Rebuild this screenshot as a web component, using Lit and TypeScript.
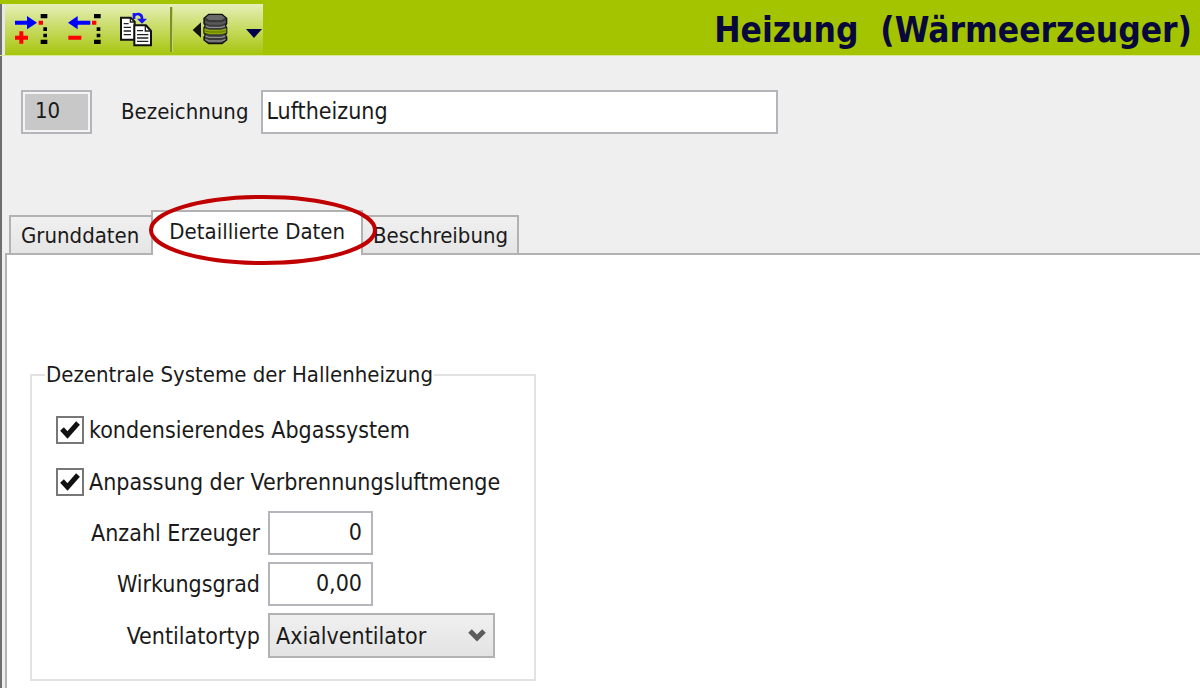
import { LitElement, html, css, svg } from "lit";
import { customElement, state } from "lit/decorators.js";

const addIcon = svg`
  <svg viewBox="42 39 105 105" width="35" height="35" aria-hidden="true">
    <path fill="#0000ff" d="M45 65H81V51L111 71L81 91V77H45Z" />
    <path fill="#ff0000" d="M45 110H58V97H70V110H84V122H70V134H58V122H45ZM116 65h13v12h-13z" />
    <path d="M122 45h20v13h-20zM130 85h11v11h-11zM130 104h11v11h-11zM122 122h20v13h-20z" />
  </svg>`;

const removeIcon = svg`
  <svg viewBox="198 39 105 105" width="35" height="35" aria-hidden="true">
    <path fill="#0000ff" d="M271 65H233V51L204 71L233 91V77H271Z" />
    <path fill="#ff0000" d="M205 110h39v12h-39zM276 65h13v12h-13z" />
    <path d="M282 45h20v13h-20zM290 85h11v11h-11zM290 104h11v11h-11zM282 122h20v13h-20z" />
  </svg>`;

const copyIcon = svg`
  <svg viewBox="354 37 105 105" width="35" height="35" aria-hidden="true">
    <path fill="#fff" stroke="#111" stroke-width="6" d="M363 54H392L404 66V120H363Z" />
    <path fill="none" stroke="#222" stroke-width="4" d="M371 72H386M371 83H393M371 94H393M371 105H393M391 54V67H402" />
    <path fill="none" stroke="#1515f5" stroke-width="8" d="M401 50C408 39 427 41 426 58" />
    <path fill="#1515f5" d="M398 40h8v18h-8zM411 57H441L426 72Z" />
    <path fill="#fff" stroke="#111" stroke-width="6" d="M403 77H438L453 94V137H403Z" />
    <path fill="none" stroke="#222" stroke-width="4" d="M411 93H429M411 105H445M411 115H445M411 125H445M436 77V94H453" />
  </svg>`;

const databaseIcon = svg`
  <svg viewBox="570 39 114 105" width="38" height="35" aria-hidden="true">
    <path fill="#111" d="M578 93L603 70V116Z" />
    <path fill="#3a3a3a" stroke="#111" stroke-width="4" d="M626 46H666L680 58V74L676 80L680 86V102L676 108L680 114V123L666 134H626L612 123V114L616 108L612 102V86L616 80L612 74V58Z" />
    <path fill="#6a6a6a" d="M628 48H664L675 56L664 63H628L617 56Z" />
    <path fill="#5a5a5a" d="M615 65L628 70H664L677 65V71L664 77H628L615 71Z" />
    <path fill="#8ea800" d="M613 88L628 92H664L679 88V101L664 106H628L613 101Z" />
    <path fill="none" stroke="#4a5800" stroke-width="2" d="M613 95L628 99H664L679 95" />
    <path fill="none" stroke="#8c8c8c" stroke-width="4" d="M617 81L628 85H664L675 81M616 111L628 115H664L676 111M616 121L628 126H664L676 121" />
  </svg>`;

const caretIcon = svg`
  <svg viewBox="735 39 54 105" width="18" height="35" aria-hidden="true">
    <path fill="#00004a" d="M738 90H786L762 117Z" />
  </svg>`;

@customElement("app-root")
export class AppRoot extends LitElement {
  @state() private activeTab = 1;

  private tabs = ["Grunddaten", "Detaillierte Daten", "Beschreibung"];

  static styles = css`
    :host {
      display: flex;
      flex-direction: column;
      box-sizing: border-box;
      min-height: 100vh;
      background: #efefef;
      color: #1a1a1a;
      font: 22px/28px "DejaVu Sans Condensed", "DejaVu Sans", sans-serif;
    }
    * {
      box-sizing: border-box;
    }
    input,
    select,
    button {
      font: inherit;
      color: inherit;
      margin: 0;
      border-radius: 0;
    }
    .header {
      display: flex;
      align-items: stretch;
      justify-content: space-between;
      background: #a4c400;
      padding: 4px 8px 0 0;
      border-bottom: 1px solid #dbe89a;
      height: 56px;
    }
    .toolbar {
      display: flex;
      align-items: center;
      gap: 17px;
      padding: 0 0 0 12px;
      border-left: 2px solid #6e6e6e;
      background: linear-gradient(#e6efb9, #c9dc68 45%, #a6c50c);
      box-shadow: inset 3px 0 #e8e8e8;
    }
    .tool {
      display: flex;
      padding: 0;
      border: 0;
      background: none;
    }
    .separator {
      width: 3px;
      height: 45px;
      background: #7c8f28;
      border-right: 1px solid #c4d76a;
    }
    .title {
      margin: 0;
      font-size: 35px;
      line-height: 52px;
      font-weight: bold;
      color: #08083c;
      white-space: pre;
    }
    .frame {
      flex: 1;
      display: flex;
      flex-direction: column;
      border-left: 2px solid #6e6e6e;
      padding-left: 3px;
    }
    .record {
      display: flex;
      align-items: center;
      padding: 34px 16px 76px;
    }
    .field {
      height: 44px;
      padding: 0 9px 3px;
      border: 2px solid #b4b5bb;
      background: #fff;
      outline: none;
      font-size: 23px;
    }
    .number {
      width: 71px;
      padding-left: 12px;
      margin-right: 29px;
      background: #c8c8c8;
      box-shadow: inset 0 0 0 2px #f4f4f4;
      font-size: 22px;
    }
    .name {
      width: 517px;
      min-width: 0;
      margin-left: 13px;
      padding-left: 3px;
    }
    .tabs {
      position: relative;
      display: flex;
      align-items: flex-end;
      padding-left: 4px;
      height: 43px;
    }
    .tab {
      height: 38px;
      padding: 2px 12px 0 10px;
      border: 2px solid #b2b2b2;
      border-bottom: 0;
      background: linear-gradient(#f0f0f0, #e5e5e5);
      white-space: nowrap;
    }
    .tab + .tab {
      margin-left: -2px;
    }
    .tab:last-of-type {
      padding-right: 9px;
    }
    .tab.active {
      position: relative;
      height: 45px;
      margin-bottom: -2px;
      padding: 0 16px 4px;
      background: #fff;
    }
    .marker {
      position: absolute;
      left: 142px;
      top: -17px;
      pointer-events: none;
    }
    .panel {
      flex: 1;
      border: 2px solid #b2b2b2;
      border-width: 2px 0 0 2px;
      background: #fff;
      padding: 106px 23px 6px;
    }
    .group {
      width: 506px;
      max-width: 100%;
      margin: 0;
      padding: 27px 24px 21px;
      border: 2px solid #e2e2e2;
      font-size: 23px;
    }
    .legend {
      margin-left: -11px;
      padding: 0 1px;
      font-size: 22px;
    }
    .check {
      display: flex;
      align-items: center;
      gap: 5px;
      height: 28px;
      margin-bottom: 24px;
    }
    .check + .check {
      margin-bottom: 15px;
    }
    .box {
      appearance: none;
      width: 28px;
      height: 28px;
      border: 2px solid #777;
      background: #fff;
    }
    .box:checked {
      background: #fff
        url("data:image/svg+xml,%3Csvg xmlns='http://www.w3.org/2000/svg' viewBox='0 0 24 24'%3E%3Cpath d='M4 11L9.500 17L20 5' fill='none' stroke='%23111' stroke-width='5'/%3E%3C/svg%3E");
    }
    .grid {
      display: grid;
      grid-template-columns: 204px 227px;
      align-items: center;
      column-gap: 8px;
      row-gap: 7px;
    }
    .label {
      text-align: right;
    }
    .amount {
      width: 105px;
      text-align: right;
    }
    .select {
      display: grid;
      align-items: center;
    }
    .choice {
      appearance: none;
      grid-area: 1 / 1;
      height: 45px;
      padding: 0 6px;
      border: 2px solid #b2b2b2;
      background: linear-gradient(#f0f0f0, #e3e3e3);
    }
    .chevron {
      grid-area: 1 / 1;
      justify-self: end;
      margin-right: 9px;
      pointer-events: none;
    }
  `;

  render() {
    return html`
      <header class="header">
        <div class="toolbar" role="toolbar">
          <button class="tool" aria-label="Hinzufügen">${addIcon}</button>
          <button class="tool" aria-label="Entfernen">${removeIcon}</button>
          <button class="tool" aria-label="Kopieren">${copyIcon}</button>
          <span class="separator"></span>
          <button class="tool" aria-label="Datenbank">${databaseIcon}</button>
          <button class="tool" aria-label="Mehr">${caretIcon}</button>
        </div>
        <h1 class="title">Heizung  (Wärmeerzeuger)</h1>
      </header>
      <main class="frame">
        <div class="record">
          <input class="field number" aria-label="Nummer" value="10" readonly />
          <label for="name">Bezeichnung</label>
          <input id="name" class="field name" value="Luftheizung" />
        </div>
        <div class="tabs" role="tablist">
          ${this.tabs.map(
            (tab, i) => html`<button
              class="tab ${i === this.activeTab ? "active" : ""}"
              role="tab"
              aria-selected=${i === this.activeTab}
              @click=${() => (this.activeTab = i)}
            >${tab}</button>`
          )}
          <svg class="marker" width="232" height="74" aria-hidden="true">
            <ellipse cx="116" cy="37" rx="112" ry="33" fill="none" stroke="#c00000" stroke-width="4" />
          </svg>
        </div>
        <section class="panel" role="tabpanel">
          <fieldset class="group">
            <legend class="legend">Dezentrale Systeme der Hallenheizung</legend>
            <label class="check"><input class="box" type="checkbox" checked />kondensierendes Abgassystem</label>
            <label class="check"><input class="box" type="checkbox" checked />Anpassung der Verbrennungsluftmenge</label>
            <div class="grid">
              <label class="label" for="count">Anzahl Erzeuger</label>
              <input id="count" class="field amount" value="0" />
              <label class="label" for="efficiency">Wirkungsgrad</label>
              <input id="efficiency" class="field amount" value="0,00" />
              <label class="label" for="fan">Ventilatortyp</label>
              <div class="select">
                <select id="fan" class="choice">
                  <option>Axialventilator</option>
                  <option>Radialventilator</option>
                </select>
                <svg class="chevron" width="18" height="14" aria-hidden="true">
                  <path d="M2 2L9 9L16 2" fill="none" stroke="#5c5c5c" stroke-width="5" />
                </svg>
              </div>
            </div>
          </fieldset>
        </section>
      </main>
    `;
  }
}
